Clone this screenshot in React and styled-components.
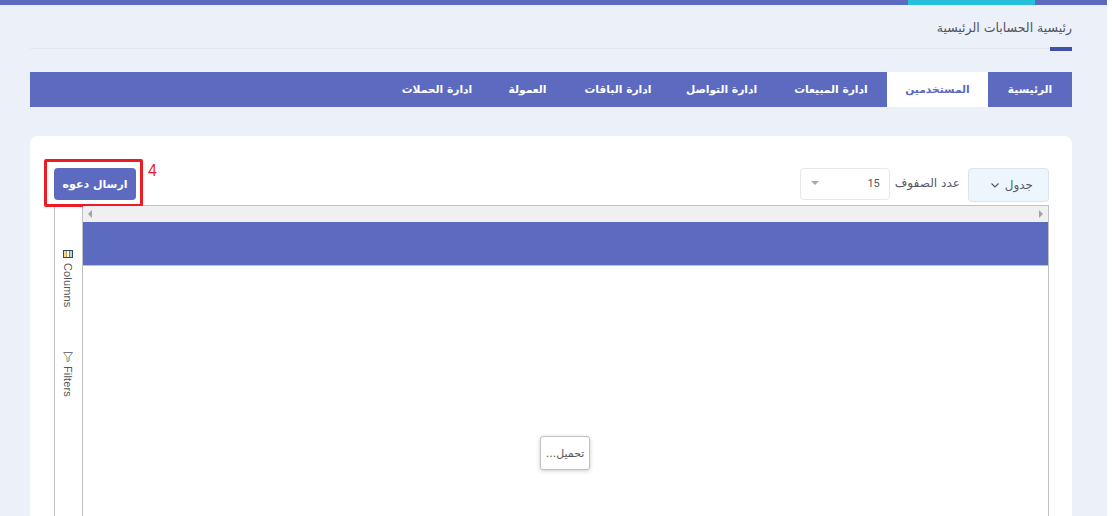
import React from "react";
import styled, { createGlobalStyle } from "styled-components";

const Global = createGlobalStyle`
  html, body { margin: 0; padding: 0; background: #fff; height: 516px; overflow: hidden; }
  #root { height: 516px; overflow: hidden; }
  * { box-sizing: border-box; }
`;

const arabic = `"DejaVu Sans", "Noto Sans", sans-serif`;

const Page = styled.div`
  width: 1107px;
  height: 516px;
  background: #ecf0f8;
  padding-top: 5px;
  position: relative;
  font-family: ${arabic};
  overflow: hidden;
`;
const TopBar = styled.div`
  position: absolute;
  top: 0;
  left: 0;
  right: 0;
  height: 5px;
  background: #5c6bc0;
  display: flex;
  justify-content: flex-end;
  padding-right: 72px;
`;
const TopAccent = styled.div`
  width: 127px;
  height: 5px;
  background: #26c0da;
`;
const Content = styled.div`
  margin: 0 35px 0 30px;
`;
const Header = styled.div`
  height: 44px;
  border-bottom: 1px solid #e2e6ee;
  direction: rtl;
  display: flex;
  align-items: flex-start;
  padding-top: 13px;
  position: relative;
`;
const Title = styled.h1`
  margin: 0;
  font-size: 12.5px;
  line-height: 20px;
  font-weight: 400;
  color: #50535f;
`;
const TitleMark = styled.div`
  position: absolute;
  right: 0;
  bottom: -3px;
  width: 22px;
  height: 4px;
  background: #3f51a8;
`;
const Nav = styled.nav`
  margin-top: 23px;
  height: 35px;
  background: #5c6bc0;
  direction: rtl;
  display: flex;
`;
const NavItem = styled.div`
  height: 35px;
  width: ${(p) => p.$w}px;
  display: flex;
  align-items: center;
  justify-content: center;
  font-size: 10.7px;
  font-weight: 700;
  color: ${(p) => (p.$active ? "#5c6bc0" : "#fff")};
  background: ${(p) => (p.$active ? "#fff" : "transparent")};
`;
const Card = styled.section`
  margin-top: 29px;
  background: #fff;
  border-radius: 8px 8px 0 0;
  height: 380px;
  padding: 32px 23px 0 24px;
`;
const Controls = styled.div`
  direction: rtl;
  display: flex;
  height: 33px;
  align-items: flex-start;
  position: relative;
`;
const ViewButton = styled.div`
  width: 81px;
  height: 34px;
  background: #eef6fd;
  border: 1px solid #dde3ea;
  border-radius: 4px;
  display: flex;
  align-items: center;
  gap: 6px;
  padding-right: 15px;
  font-size: 12px;
  color: #555a66;
`;
const RowsLabel = styled.span`
  margin: 0 8px 0 5px;
  height: 30px;
  line-height: 30px;
  font-size: 12.1px;
  color: #555a66;
`;
const RowsSelect = styled.div`
  width: 90px;
  height: 32px;
  border: 1px solid #e6e8ee;
  border-radius: 4px;
  display: flex;
  align-items: center;
  justify-content: space-between;
  padding: 0 9px 2px 10px;
  font-size: 11px;
  font-family: "Roboto", sans-serif;
  color: #555;
`;
const Caret = styled.span`
  width: 0;
  height: 0;
  border-left: 4px solid transparent;
  border-right: 4px solid transparent;
  border-top: 4px solid #aaa;
`;
const InviteWrap = styled.div`
  margin-right: auto;
  position: relative;
  width: 82px;
  height: 33px;
`;
const InviteButton = styled.div`
  width: 82px;
  height: 32px;
  background: #5c6bc0;
  border-radius: 4px;
  color: #fff;
  font-size: 11px;
  font-weight: 700;
  display: flex;
  align-items: center;
  justify-content: center;
`;
const Highlight = styled.div`
  position: absolute;
  left: -10px;
  top: -9px;
  width: 99px;
  height: 48px;
  border: 3px solid #ed1c24;
  border-radius: 2px;
`;
const Number = styled.span`
  position: absolute;
  left: 94px;
  top: -7px;
  font-family: "Liberation Sans", sans-serif;
  font-size: 16px;
  line-height: 20px;
  color: #ed1c24;
`;
const Grid = styled.div`
  margin-top: 4px;
  height: 320px;
  border: 1px solid #bdc3c7;
  border-bottom: 0;
  display: flex;
`;
const SideBar = styled.aside`
  width: 28px;
  flex: none;
  border-right: 1px solid #bdc3c7;
  display: flex;
  flex-direction: column;
  align-items: center;
  padding: 43px 2px 0 0;
  gap: 45px;
`;
const SideTab = styled.div`
  display: flex;
  flex-direction: row;
  align-items: center;
  gap: 4px;
  writing-mode: vertical-rl;
  font-family: "Liberation Sans", sans-serif;
  font-size: 11px;
  letter-spacing: 0.15px;
  color: #555;
`;
const Main = styled.div`
  flex: 1;
  display: flex;
  flex-direction: column;
  position: relative;
`;
const ScrollStrip = styled.div`
  height: 16px;
  background: #f0f0f0;
  display: flex;
  justify-content: space-between;
  align-items: center;
  padding: 0 5px;
`;
const Arrow = styled.span`
  width: 0;
  height: 0;
  border-top: 4px solid transparent;
  border-bottom: 4px solid transparent;
  ${(p) => (p.$dir === "left" ? "border-right: 4px solid #a3a3a3;" : "border-left: 4px solid #a3a3a3;")}
`;
const GridHeader = styled.div`
  height: 44px;
  background: #5c6bc0;
  border-bottom: 1px solid #bdc3c7;
`;
const Loading = styled.div`
  position: absolute;
  left: 457px;
  top: 230px;
  width: 50px;
  height: 34px;
  background: #fff;
  border: 1px solid #bdc3c7;
  border-radius: 3px;
  box-shadow: 0 1px 4px rgba(0, 0, 0, 0.2);
  display: flex;
  align-items: center;
  justify-content: center;
  direction: rtl;
  font-size: 11px;
  color: #555;
`;
const ScrollGutter = styled.div`
  position: absolute;
  top: 61px;
  left: 1107px;
  width: 5px;
  height: 1px;
  background: #ecf0f8;
`;

const items = [
  ["الرئيسية", 84],
  ["المستخدمين", 101],
  ["ادارة المبيعات", 112],
  ["ادارة التواصل", 107],
  ["ادارة الباقات", 100],
  ["العمولة", 81],
  ["ادارة الحملات", 100],
];

export default function App() {
  return (
    <>
      <Global />
      <Page>
        <TopBar>
          <TopAccent />
        </TopBar>
        <Content>
          <Header>
            <Title>رئيسية الحسابات الرئيسية</Title>
            <TitleMark />
          </Header>
          <Nav>
            {items.map(([t, w], i) => (
              <NavItem key={t} $w={w} $active={i === 1}>
                {t}
              </NavItem>
            ))}
          </Nav>
          <Card>
            <Controls>
              <ViewButton>
                جدول
                <svg width="8" height="5" viewBox="0 0 8 5" fill="none" stroke="#555" strokeWidth="1.1">
                  <path d="M.5.5L4 4 7.5.5" />
                </svg>
              </ViewButton>
              <RowsLabel>عدد الصفوف</RowsLabel>
              <RowsSelect>
                <span>15</span>
                <Caret />
              </RowsSelect>
              <InviteWrap>
                <InviteButton>ارسال دعوه</InviteButton>
                <Highlight />
                <Number>4</Number>
              </InviteWrap>
            </Controls>
            <Grid>
              <SideBar>
                <SideTab>
                  <svg width="10" height="10" viewBox="0 0 10 10">
                    <rect x="0.5" y="1.5" width="9" height="7" fill="#fff" stroke="#34495e" />
                    <rect x="3" y="2" width="1" height="6" fill="#d6962a" />
                    <rect x="6" y="2" width="1" height="6" fill="#3c8fc9" />
                    <rect x="1" y="2" width="2" height="6" fill="#f2d9a0" />
                    <rect x="7" y="2" width="2" height="6" fill="#b5d6ee" />
                  </svg>
                  Columns
                </SideTab>
                <SideTab>
                  <svg width="10" height="10" viewBox="0 0 10 10" fill="#fff" strokeWidth="1">
                    <path d="M0.5 0.5H9.5" stroke="#777" />
                    <path d="M0.5 0.5L4 5V9.5" stroke="#d6962a" />
                    <path d="M9.5 0.5L6 5V9L4 9.5" stroke="#3c8fc9" />
                  </svg>
                  Filters
                </SideTab>
              </SideBar>
              <Main>
                <ScrollStrip>
                  <Arrow $dir="left" />
                  <Arrow $dir="right" />
                </ScrollStrip>
                <GridHeader />
                <Loading>تحميل...</Loading>
              </Main>
            </Grid>
          </Card>
        </Content>
        <ScrollGutter />
      </Page>
    </>
  );
}
